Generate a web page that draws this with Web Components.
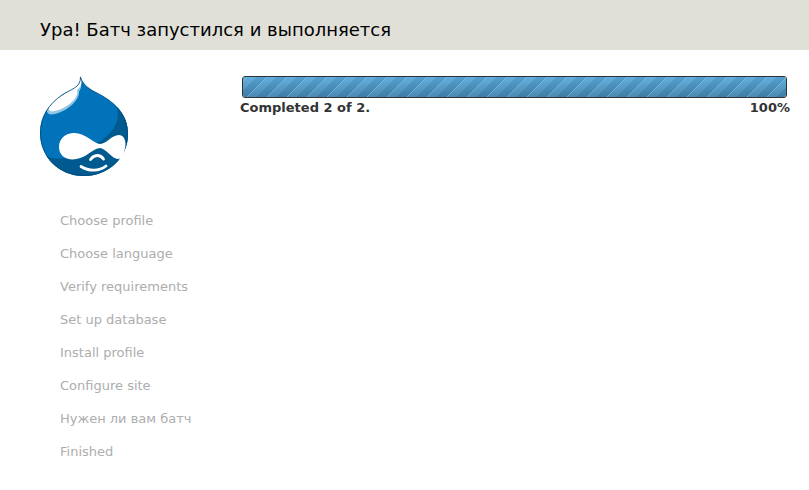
<!DOCTYPE html>
<html lang="ru">
<head>
<meta charset="utf-8">
<title>Ура! Батч запустился и выполняется</title>
<style>
body { margin: 0; background: #fff; color: #333; font: 13px/20px "DejaVu Sans", Verdana, sans-serif; }
</style>
</head>
<body>
<install-page>
  <page-branding slot="header">Ура! Батч запустился и выполняется</page-branding>
  <drop-logo slot="sidebar"></drop-logo>
  <task-list slot="sidebar">
    <task-item>Choose profile</task-item>
    <task-item>Choose language</task-item>
    <task-item>Verify requirements</task-item>
    <task-item>Set up database</task-item>
    <task-item>Install profile</task-item>
    <task-item>Configure site</task-item>
    <task-item>Нужен ли вам батч</task-item>
    <task-item>Finished</task-item>
  </task-list>
  <batch-progress value="100">Completed 2 of 2.</batch-progress>
</install-page>
<script>
const define = (name, html, setup) => customElements.define(name, class extends HTMLElement {
  constructor() {
    super();
    const template = document.createElement('template');
    template.innerHTML = html;
    this.attachShadow({ mode: 'open' }).append(template.content.cloneNode(true));
  }
  connectedCallback() { if (setup) setup(this); }
});

define('install-page', `
<style>
:host { display: block; }
.page { display: grid; grid-template-columns: 160px minmax(0, 1fr); gap: 40px; padding: 26px 19px 20px 40px; }
main { min-width: 0; }
</style>
<slot name="header"></slot>
<div class="page">
  <aside><slot name="sidebar"></slot></aside>
  <main><slot></slot></main>
</div>`);

define('page-branding', `
<style>
:host { display: block; background: #e0e0d8; color: #000; padding: 20px 40px 10px; }
h1 { margin: 0; font-size: 18px; line-height: 20px; font-weight: normal; }
</style>
<header><h1><slot></slot></h1></header>`);

define('drop-logo', `
<style>
:host { display: block; }
svg { display: block; width: 88px; height: 100px; }
</style>
<svg viewBox="0 0 88 100" role="img" aria-label="Drupal">
  <defs><clipPath id="drop"><path d="M40.500 0C42 7 47 12 56 16.500C73 25 88 37 88 58C88 82 68 100 44 100C19 100 0 81 0 57C0 40 9 28 22 19C30 13.500 41 12 40.500 0Z"/></clipPath></defs>
  <g clip-path="url(#drop)">
    <path fill="#0073ba" d="M0 0H88V100H0Z"/>
    <path fill="#005a8f" d="M75 24C82 43 76 56 57 67L24 82Q14 84 4 79L0 100H88V24Z"/>
    <path fill="#93c5e4" d="M39 0L41 9C42 13 38 15 39 18C37 28 22 38 11 38.500Q6 38 7 32L12 20L36 8Z"/>
    <path fill="#fff" d="M39 0H41C42.500 8 41 11 37 14C40 22 25 34 12 35.500Q8 35 9 31C12 24 20 21 26 17L34 12Z"/>
  </g>
  <path fill="none" stroke="#004b79" stroke-opacity=".8" d="M40.500 1C42 7 47 12 56 16.500C73 25 87.500 37 87.500 58C87.500 82 68 99.500 44 99.500C19 99.500 .5 81 .5 57C.5 40 9 28 22 19C30 13.500 41 12 40.500 1Z"/>
  <path fill="#fff" d="M33 57C45 56 54 68 60 68C67 68 71 59 79 59C83 59 85.500 63 85.500 68C85 75 83 83 78 83C72 83 67 73 60 72C53 72 46 83 33 83.500C24 83.500 19 78 19 71C19 63 25 57.500 33 57Z"/>
  <path fill="none" stroke="#fff" stroke-width="2.800" stroke-linecap="round" d="M50.500 83.500C54 78.500 60 78 63.500 83M41 90.500C49 95.500 59 95.500 66 90"/>
</svg>`);

define('task-list', `
<style>
:host { display: block; padding-top: 29px; }
div { display: grid; gap: 1px; }
</style>
<div role="list"><slot></slot></div>`);

define('task-item', `
<style>
:host { display: block; color: #adadad; padding: 6px 0 6px 20px; white-space: nowrap; }
</style>
<slot></slot>`, host => host.setAttribute('role', 'listitem'));

define('batch-progress', `
<style>
:host { display: block; color: #333; font-weight: bold; }
.track { margin: 0 3px 0 2px; border: 1px solid #333; border-radius: 3px; overflow: hidden; }
.bar { box-sizing: border-box; height: 20px;
  background:
    repeating-linear-gradient(135deg, rgba(0,40,80,.09) 0 8%, rgba(150,210,245,.45) 8% 12%, rgba(255,255,255,.04) 12% 34%, rgba(0,40,80,.09) 34% 50%) 0 0 / 20px 20px,
    linear-gradient(#5dabdb, #4585ae); }
.info { display: flex; justify-content: space-between; line-height: 20px; }
</style>
<div class="track" role="progressbar" aria-valuemin="0" aria-valuemax="100"><div class="bar"></div></div>
<div class="info"><span><slot></slot></span><span class="percent"></span></div>`, host => {
  const value = host.getAttribute('value');
  const track = host.shadowRoot.querySelector('.track');
  track.setAttribute('aria-valuenow', value);
  track.setAttribute('aria-label', host.textContent);
  host.shadowRoot.querySelector('.bar').style.width = value + '%';
  host.shadowRoot.querySelector('.percent').textContent = value + '%';
});
</script>
</body>
</html>
